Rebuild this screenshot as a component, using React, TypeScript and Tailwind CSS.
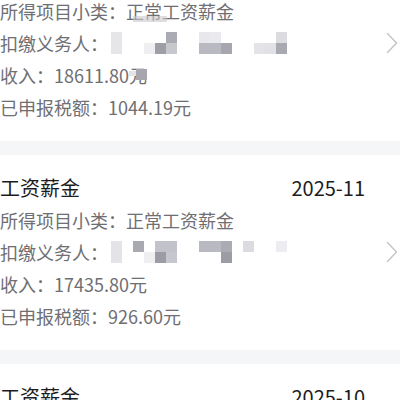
import React from "react";

type Cell = string | null;

interface Record {
  period: string;
  income: string;
  tax: string;
  mosaic: [Cell[], Cell[]];
}

const records: Record[] = [
  {
    period: "2025-12",
    income: "18611.80",
    tax: "1044.19",
    mosaic: [
      ["#e6e6e8", null, null, null, null, "#ababb3", null, null, "#e8e8ec", "#eaeaee", null, null, null, null, null, "#dcdce0"],
      ["#e6e6e8", null, null, "#efeff1", "#9e9ea6", "#c6c8ce", null, null, "#b9b9c1", "#b9b9c1", "#a6a6ae", null, null, "#e4e4e8", "#e2e2e6", "#a9a9b1"],
    ],
  },
  {
    period: "2025-11",
    income: "17435.80",
    tax: "926.60",
    mosaic: [
      ["#e4e4e8", null, "#a9a9b1", null, "#c2c2ca", "#c2c2ca", null, null, "#b9b9c1", "#b9b9c1", "#ababb3", null, "#dcdce0", null, null, "#ededf1"],
      ["#e4e4e8", null, null, "#efeff1", "#9c9ca6", "#c6c6ce", null, null, null, null, "#9c9ca4", null, null, null, null, null],
    ],
  },
  {
    period: "2025-10",
    income: "18611.80",
    tax: "1044.19",
    mosaic: [[], []],
  },
];

const Mosaic = ({ rows }: { rows: [Cell[], Cell[]] }) => (
  <div className="ml-[3px] grid grid-cols-[repeat(16,11px)] grid-rows-[11px_11px]">
    {rows.map((row, r) =>
      Array.from({ length: 16 }).map((_, c) => (
        <div
          key={`${r}-${c}`}
          style={{ backgroundColor: row[c] ?? "transparent" }}
        />
      ))
    )}
  </div>
);

const Chevron = () => (
  <svg width="12" height="22" viewBox="0 0 12 22" fill="none">
    <path d="M1.5 1.5 L10.5 11 L1.5 20.5" stroke="#c4c4c8" strokeWidth="1.4" strokeLinecap="round" strokeLinejoin="round" />
  </svg>
);

const RecordCard = ({ rec, first }: { rec: Record; first?: boolean }) => (
  <div className="flex items-center bg-white pt-[17px] pb-[18px]">
    <div className="flex-1 text-[18px] leading-[32px] text-[#6f6f73]">
      <div className="flex justify-between pr-[21px] text-[20px] text-[#1c1c1e]">
        <span>工资薪金</span>
        <span>{rec.period}</span>
      </div>
      <div className="relative">
        所得项目小类：正常工资薪金
        {first && (
          <span className="absolute left-[133px] top-[21px] h-[6px] w-[34px] bg-[#c8c8cc] opacity-60" />
        )}
      </div>
      <div className="flex items-center">
        <span>扣缴义务人：</span>
        <Mosaic rows={rec.mosaic} />
      </div>
      <div>
        收入：{rec.income}
        <span className="relative">
          元
          {first && (
            <>
              <span className="absolute left-[0px] top-[9px] h-[5px] w-[7px] bg-[#e4e4e8]" />
              <span className="absolute left-[7px] top-[7px] h-[11px] w-[11px] bg-[#a6a6ae]" />
            </>
          )}
        </span>
      </div>
      <div>已申报税额：{rec.tax}元</div>
    </div>
    <div className="w-[12px] mr-[2px]">
      <Chevron />
    </div>
  </div>
);

export default function App() {
  return (
    <div
      className="h-[400px] w-[400px] overflow-hidden bg-white"
      style={{ fontFamily: '"Noto Sans CJK SC", "Noto Sans", sans-serif' }}
    >
      <div className="-mt-[54px] flex flex-col">
        {records.map((rec, i) => (
          <React.Fragment key={rec.period}>
            {i > 0 && <div className="h-[14px] bg-[#f5f6f8]" />}
            <RecordCard rec={rec} first={i === 0} />
          </React.Fragment>
        ))}
      </div>
    </div>
  );
}
